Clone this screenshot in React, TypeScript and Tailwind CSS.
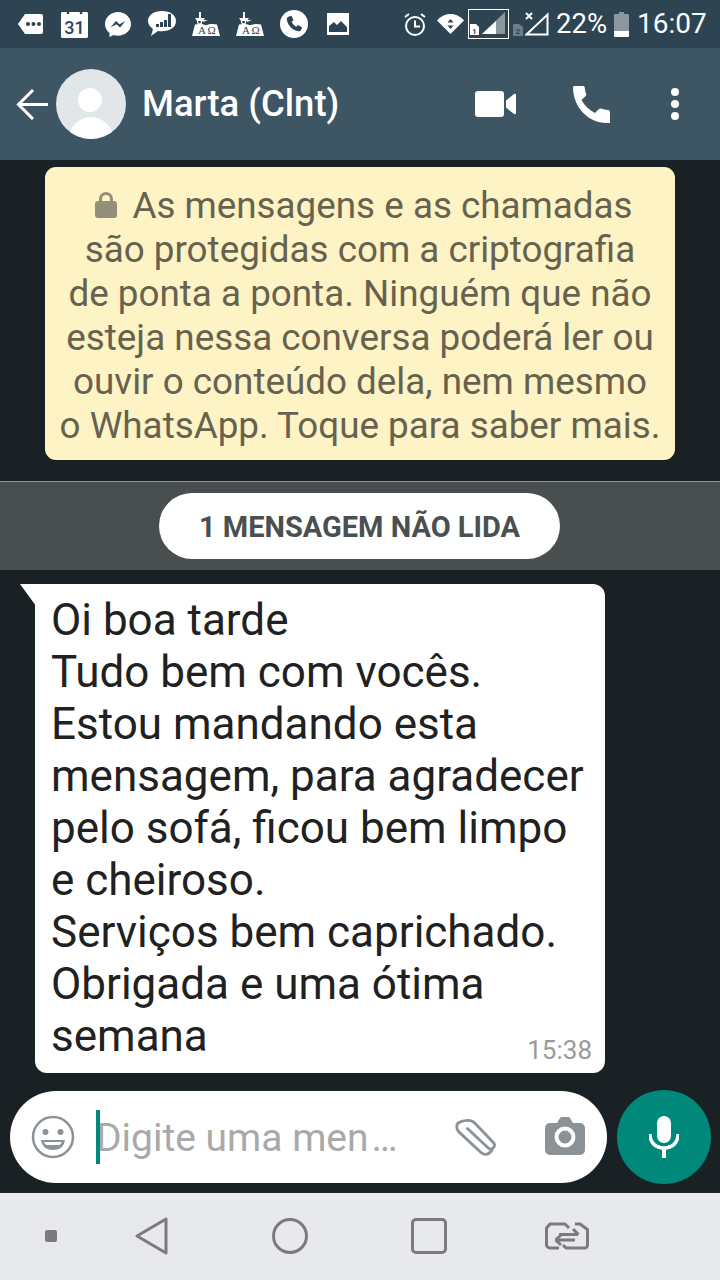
import React from "react";

const Book = ({ cls }: { cls: string }) => (
  <svg width="28" height="24" viewBox="0 0 28 24" className={cls} fill="white">
    <rect x="7" y="0" width="2" height="7" />
    <path d="M3 6h10l-2 3H5z" />
    <path d="M10 8h6l-5 2z" />
    <circle cx="7.500" cy="10" r="2" fill="none" stroke="white" strokeWidth="1.200" />
    <path d="M3 12.500c4-1 8-.5 11 .8c3-1.300 7-1.800 11-.8l3 11.500H0z" />
    <text x="6" y="22" fontSize="11" fill="#2e4452" fontFamily="'Liberation Serif', serif">A</text>
    <text x="15.500" y="22" fontSize="11" fill="#2e4452" fontFamily="'Liberation Serif', serif">Ω</text>
  </svg>
);

const StatusBar = () => (
  <div className="h-12 bg-[#2e4452] flex items-center text-white pl-[18px] shrink-0">
    <svg width="25" height="20" viewBox="0 0 25 20" className="shrink-0" fill="white">
      <path d="M7 0h16a2 2 0 0 1 2 2v16a2 2 0 0 1-2 2H7L0 10z" />
      <circle cx="10" cy="10" r="2" fill="#2e4452" />
      <circle cx="15.500" cy="10" r="2" fill="#2e4452" />
      <circle cx="21" cy="10" r="2" fill="#2e4452" />
    </svg>
    <svg width="27" height="28" viewBox="0 0 27 28" className="ml-[18px] shrink-0" fill="white">
      <path d="M1 2h25l1 1v24l-1 1H1l-1-1V3z" />
      <circle cx="7" cy="3" r="1.300" fill="#2e4452" />
      <circle cx="20" cy="3" r="1.300" fill="#2e4452" />
      <text x="13.500" y="24" textAnchor="middle" fontSize="18" fontWeight="500" fill="#2e4452" fontFamily="Roboto, sans-serif">31</text>
    </svg>
    <svg width="26" height="25" viewBox="0 0 26 25" className="ml-[17px] shrink-0">
      <path d="M13 0C6 0 0 5 0 12c0 4 2 7 4.500 9v4l4-2c1.500.5 3 .7 4.500.7c7 0 13-5 13-11.700S20 0 13 0z" fill="white" />
      <path d="M5.500 15.500l5.500-6.500l3.500 3.200l6-3.200l-5.500 6.500l-3.500-3.200z" fill="#2e4452" />
    </svg>
    <svg width="28" height="26" viewBox="0 0 28 26" className="ml-[17px] shrink-0">
      <path d="M14 0C6 0 0 4 0 10c0 3 2 6 5 8l-2 7l7-5c1.300.2 2.700.3 4 .3c8 0 14-4.300 14-10.300S22 0 14 0z" fill="white" />
      <path d="M8 13h3v3H8zM12 11h3v5h-3zM16 9h3v7h-3zM20 3h3v13h-3z" fill="#2e4452" />
    </svg>
    <Book cls="ml-[16px] shrink-0" />
    <Book cls="ml-[16px] shrink-0" />
    <svg width="28" height="28" viewBox="0 0 28 28" className="ml-[16px] shrink-0">
      <circle cx="14" cy="14" r="14" fill="white" />
      <path d="M9 6.500l2.500-.8l2 4.500l-1.800 1.500c.8 2.200 2.400 4 4.500 5l1.700-1.700l4.200 2.300l-1 2.700c-.5 1-1.500 1.500-2.500 1.300C12 20 7.500 15 6.800 9.500c-.1-1.300.8-2.500 2.200-3z" fill="#2e4452" />
    </svg>
    <svg width="22" height="22" viewBox="0 0 22 22" className="ml-[19px] shrink-0">
      <rect width="22" height="22" fill="white" />
      <path d="M2 19v-6l5-4l3 3l4-4l6 6v5z" fill="#2e4452" />
      <rect x="2" y="17" width="18" height="2" fill="#2e4452" />
    </svg>
    <svg width="22" height="24" viewBox="0 0 22 24" className="ml-[55px] shrink-0" fill="none" stroke="white">
      <circle cx="11" cy="14" r="9" strokeWidth="2" />
      <path d="M11 8.500V14.500H16" strokeWidth="2" />
      <path d="M1 5l4-3M21 5l-4-3" strokeWidth="2" />
    </svg>
    <svg width="27" height="20" viewBox="0 0 27 20" className="ml-[11px] shrink-0">
      <path d="M0 6.500C3.500 2.500 8 0 13.500 0S23.500 2.500 27 6.500L13.500 20z" fill="white" />
      <path d="M13.500 5l3 3.500h-6zM13.500 15l3-3.500h-6z" fill="#2e4452" />
    </svg>
    <svg width="41" height="30" viewBox="0 0 41 30" className="ml-[4px] shrink-0">
      <rect x=".5" y=".5" width="40" height="29" fill="none" stroke="white" />
      <path d="M14 25L37 3v22z" fill="#8a979e" />
      <path d="M14 25l14-13v13z" fill="white" />
      <path d="M2 15h6l3 3v8H2z" fill="white" />
      <text x="6.500" y="25" textAnchor="middle" fontSize="7.500" fontWeight="700" fill="#2e4452" fontFamily="Roboto, sans-serif">1</text>
    </svg>
    <svg width="10" height="12" viewBox="0 0 10 12" className="ml-[4px] mt-[11px] shrink-0">
      <path d="M0 0h6l4 3v9H0z" fill="#6d7e88" />
      <text x="5" y="10" textAnchor="middle" fontSize="7.500" fontWeight="700" fill="#2e4452" fontFamily="Roboto, sans-serif">2</text>
    </svg>
    <svg width="24" height="24" viewBox="0 0 24 24" className="ml-[2px] shrink-0" fill="none" stroke="white">
      <path d="M1.500 22.500L22.500 2.500v20z" strokeWidth="2" />
      <path d="M1 1l6 6M7 1L1 7" strokeWidth="2" />
    </svg>
    <span className="ml-[7px] w-[50px] text-[27.500px] leading-none font-['Roboto',sans-serif] shrink-0">22%</span>
    <svg width="15" height="25" viewBox="0 0 15 25" className="ml-[8px] shrink-0">
      <path d="M5 0h5v2h4a1 1 0 0 1 1 1v21a1 1 0 0 1-1 1H1a1 1 0 0 1-1-1V3a1 1 0 0 1 1-1h4z" fill="#8a979e" />
      <path d="M0 19h15v5a1 1 0 0 1-1 1H1a1 1 0 0 1-1-1z" fill="white" />
    </svg>
    <span className="ml-[8px] text-[28px] leading-none font-['Roboto',sans-serif] shrink-0">16:07</span>
  </div>
);

const Header = () => (
  <div className="h-28 bg-[#3e5664] flex items-center text-white shrink-0">
    <svg width="32" height="32" viewBox="0 0 32 32" className="ml-[16px] shrink-0" fill="none" stroke="white" strokeWidth="3">
      <path d="M32 16.500H3M17 2L2.500 16.500L17 31" />
    </svg>
    <div className="ml-[8px] w-[70px] h-[70px] rounded-full bg-[#e1e6e8] overflow-hidden relative shrink-0">
      <div className="absolute left-[22px] top-[19px] w-6 h-6 rounded-full bg-white" />
      <div className="absolute left-[13px] top-[48px] w-[44px] h-[44px] rounded-full bg-white" />
    </div>
    <span className="ml-[16px] w-[315px] shrink-0 text-[36.500px] font-medium font-['Roboto',sans-serif]">Marta (Clnt)</span>
    <svg width="41" height="26" viewBox="0 0 41 26" className="ml-[18px] shrink-0" fill="white">
      <rect width="29" height="26" rx="3" />
      <path d="M31 9.500l8-6.500c1-.5 2 0 2 1v18c0 1-1 1.500-2 1l-8-6.500z" />
    </svg>
    <svg width="38" height="38" viewBox="0 0 38 38" className="ml-[56px] shrink-0" fill="white">
      <path d="M2 1h9c1 0 1.500.5 1.700 1.500c.3 2.500.7 4.500 1.500 6.500c.3.700 0 1.500-.5 2L9.500 15C12.500 20.500 17 25 23 28l4-4c.5-.5 1.300-.8 2-.5c2 .8 4.500 1.200 7 1.500c1 .2 2 .8 2 2V38c-.2 0-2 0-3 0C16 38 1 22 1 2z" />
    </svg>
    <svg width="10" height="32" viewBox="0 0 10 32" className="ml-[60px] shrink-0" fill="white">
      <circle cx="5" cy="4" r="4" />
      <circle cx="5" cy="16" r="4" />
      <circle cx="5" cy="28" r="4" />
    </svg>
  </div>
);

const Composer = () => (
  <div className="flex items-center pl-[10px] pt-[17px] pb-[9px] shrink-0">
    <div className="w-[597px] h-[92px] rounded-full bg-white flex items-center relative">
      <svg width="44" height="44" viewBox="0 0 44 44" className="ml-[21px] shrink-0">
        <circle cx="22" cy="22" r="20" fill="none" stroke="#8b9298" strokeWidth="2.500" />
        <circle cx="14.500" cy="17" r="3" fill="#8b9298" />
        <circle cx="29.500" cy="17" r="3" fill="#8b9298" />
        <path d="M10 25h24c-1 7-6 10-12 10s-11-3-12-10z" fill="#8b9298" />
        <path d="M13 27h18c-1 2-2 2.500-2.500 3h-13c-.7-.5-2-1-2.500-3z" fill="white" />
      </svg>
      <div className="absolute left-[86px] top-[19px] w-1 h-[54px] bg-[#00897b]" />
      <span className="ml-[21px] mt-[3px] text-[39px] leading-none text-[#a9a9a9] font-['Roboto',sans-serif]">Digite uma men<span className="ml-[3px]">…</span></span>
      <svg width="44" height="40" viewBox="0 0 44 40" className="absolute left-[445px] top-[27px]" fill="none" stroke="#8b9298" strokeWidth="3" strokeLinecap="round" strokeLinejoin="round">
        <path d="M12 9L34 29.500c3 3 8-1 6-5L20 3.500C16-.500 10 0 4.500 2S.5 10 3 12.500L26 34c4 4 10 2 12-3" transform="translate(1 2) scale(.95)" />
      </svg>
      <svg width="40" height="38" viewBox="0 0 40 38" className="absolute left-[535px] top-[26px]">
        <path d="M5 6h7l3-5c.3-.5 1-1 2-1h6c1 0 1.700.5 2 1l3 5h7a5 5 0 0 1 5 5v22a5 5 0 0 1-5 5H5a5 5 0 0 1-5-5V11a5 5 0 0 1 5-5z" fill="#8b9298" />
        <circle cx="20" cy="20" r="8.500" fill="none" stroke="white" strokeWidth="4" />
      </svg>
    </div>
    <div className="ml-[10px] w-[94px] h-[94px] rounded-full bg-[#00897b] flex items-center justify-center shrink-0">
      <svg width="30" height="42" viewBox="0 0 30 42" fill="white">
        <rect x="8" y="0" width="14" height="27" rx="7" />
        <path d="M1 18c0 9 6 14 14 14s14-5 14-14" fill="none" stroke="white" strokeWidth="3.500" />
        <rect x="13" y="31" width="4" height="11" />
      </svg>
    </div>
  </div>
);

const NavBar = () => (
  <div className="h-[87px] bg-[#e8e9ed] flex items-center shrink-0 pb-[1px]">
    <div className="ml-[45px] w-3 h-3 rounded-[2px] bg-[#7b7b7b]" />
    <svg width="34" height="38" viewBox="0 0 34 38" className="ml-[78px] shrink-0" fill="none" stroke="#7b7b7b" strokeWidth="3" strokeLinejoin="round">
      <path d="M2 19L31 2v34z" />
    </svg>
    <svg width="36" height="36" viewBox="0 0 36 36" className="ml-[103px] shrink-0" fill="none" stroke="#7b7b7b" strokeWidth="3">
      <circle cx="18" cy="18" r="16.500" />
    </svg>
    <div className="ml-[103px] w-9 h-9 rounded-[5px] border-[3px] border-[#7b7b7b]" />
    <svg width="44" height="28" viewBox="0 0 44 28" className="ml-[98px] shrink-0" fill="none" stroke="#7b7b7b" strokeWidth="3" strokeLinejoin="round">
      <path d="M14 26H5a3.500 3.500 0 0 1-3.500-3.500V6L5 2h15l4 4M30 2h5l7.500 5.500V23a3 3 0 0 1-3 3H21l-3-3" />
      <path d="M14 12.500H33M28 7l5.500 5.500M11 18H30M16 13l-5.500 5M16 23l-5.500-5" />
    </svg>
  </div>
);

export default function App() {
  return (
    <div className="w-[720px] h-[1280px] bg-[#192124] flex flex-col font-['Roboto',sans-serif] overflow-hidden">
      <StatusBar />
      <Header />
      <div className="flex-1 flex flex-col min-h-0">
        <div className="mt-[7px] mx-[45px] h-[293px] rounded-[11px] bg-[#fdf3c5] text-[#66624f] text-[36.800px] leading-[44px] text-center flex flex-col justify-center pt-[5px] whitespace-nowrap">
          <div className="pl-[8px]">
            <svg width="22" height="28" viewBox="0 0 22 28" className="inline-block mr-[15px] mb-[2px] align-[-3px]" fill="#938f78">
              <path d="M5.500 12V8a5.500 5.500 0 0 1 11 0v4" fill="none" stroke="#938f78" strokeWidth="3" />
              <rect x="0" y="10" width="22" height="17" rx="3" />
            </svg>
            As mensagens e as chamadas
          </div>
          <div>são protegidas com a criptografia</div>
          <div>de ponta a ponta. Ninguém que não</div>
          <div>esteja nessa conversa poderá ler ou</div>
          <div>ouvir o conteúdo dela, nem mesmo</div>
          <div>o WhatsApp. Toque para saber mais.</div>
        </div>
        <div className="mt-[21px] h-[89px] bg-[#494f4f] border-t border-[#8f9494] flex items-center justify-center">
          <div className="w-[401px] h-[66px] rounded-full bg-white text-[#4a4f50] text-[29px] pt-[3px] font-bold flex items-center justify-center ml-[-1px]">
            1 MENSAGEM NÃO LIDA
          </div>
        </div>
        <div className="mt-[14px] ml-[35px] w-[570px] h-[489px] bg-white rounded-[12px] rounded-tl-none relative pl-[16px] pt-[10px] text-[#212121] text-[44px] leading-[52px] whitespace-nowrap">
          <div className="absolute left-[-15px] top-0 w-4 h-[22px] bg-white [clip-path:polygon(0_0,100%_0,100%_100%)]" />
          <div>Oi boa tarde</div>
          <div>Tudo bem com vocês.</div>
          <div>Estou mandando esta</div>
          <div>mensagem, para agradecer</div>
          <div>pelo sofá, ficou bem limpo</div>
          <div>e cheiroso.</div>
          <div>Serviços bem caprichado.</div>
          <div>Obrigada e uma ótima</div>
          <div>semana</div>
          <span className="absolute right-[13px] bottom-[8px] text-[26px] leading-[30px] text-[#9a9a9a]">15:38</span>
        </div>
        <div className="flex-1" />
        <Composer />
      </div>
      <NavBar />
    </div>
  );
}
